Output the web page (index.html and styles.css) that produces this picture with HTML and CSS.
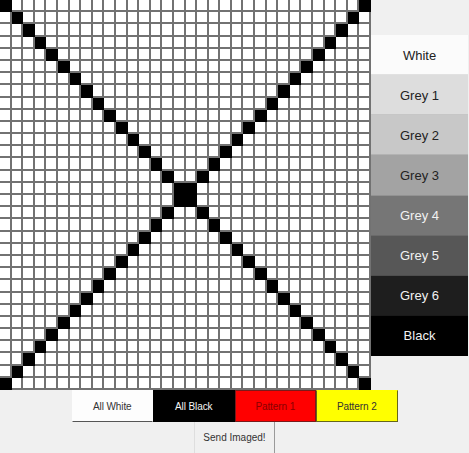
FILE: index.html
```html
<!DOCTYPE html>
<html>
<head>
<meta charset="utf-8">
<link rel="stylesheet" href="styles.css">
</head>
<body>
<div class="app">
  <div class="top">
    <div class="grid" id="grid"></div>
    <div class="side">
      <div class="spacer"></div>
      <div class="shade s-white">White</div>
      <div class="shade s-g1">Grey 1</div>
      <div class="shade s-g2">Grey 2</div>
      <div class="shade s-g3">Grey 3</div>
      <div class="shade s-g4 light">Grey 4</div>
      <div class="shade s-g5 light">Grey 5</div>
      <div class="shade s-g6 light">Grey 6</div>
      <div class="shade s-black light">Black</div>
    </div>
  </div>
  <div class="actions">
    <div class="btn b-white">All White</div>
    <div class="btn b-black">All Black</div>
    <div class="btn b-red">Pattern 1</div>
    <div class="btn b-yellow">Pattern 2</div>
  </div>
  <div class="send-row">
    <div class="send">Send Imaged!</div>
  </div>
</div>
<script src="script.js"></script>
</body>
</html>
```

FILE: styles.css
```css
html, body {
  margin: 0;
  padding: 0;
  background: #f0f0f0;
}
body {
  font-family: "Liberation Sans", Arial, sans-serif;
  color: #222;
}
.app {
  width: 469px;
  height: 453px;
  overflow: hidden;
  background: #f0f0f0;
}
.top {
  display: flex;
  height: 390px;
}
.grid {
  width: 371px;
  height: 390px;
  display: grid;
  grid-template-columns: repeat(32, 1fr);
  grid-template-rows: repeat(32, 1fr);
  background: #fff;
  flex: none;
}
.cell {
  box-sizing: border-box;
  background: #fff;
  border-right: 2px solid #727272;
  border-bottom: 2px solid #727272;
}
.cell.on {
  background: #000;
  border-color: #000;
}
.side {
  width: 97px;
  display: flex;
  flex-direction: column;
}
.spacer {
  height: 35px;
  flex: none;
}
.shade {
  box-sizing: border-box;
  height: 40.125px;
  display: flex;
  align-items: center;
  justify-content: center;
  padding-top: 1px;
  font-size: 13px;
  color: #222;
  border-bottom: 1px solid rgba(0, 0, 0, 0.1);
}
.shade.light { color: #f2f2f2; }
.s-white { background: #fbfbfb; }
.s-g1 { background: #dddddd; }
.s-g2 { background: #c8c8c8; }
.s-g3 { background: #a3a3a3; }
.s-g4 { background: #767676; }
.s-g5 { background: #575757; }
.s-g6 { background: #1e1e1e; }
.s-black { background: #000; }
.actions {
  display: flex;
  justify-content: center;
  height: 32px;
}
.btn {
  box-sizing: border-box;
  width: 81.5px;
  height: 32px;
  display: flex;
  align-items: center;
  justify-content: center;
  font-size: 10px;
  letter-spacing: -0.1px;
  border: 1px solid rgba(0, 0, 0, 0.55);
  border-top-color: transparent;
}
.b-white {
  background: #fdfdfd;
  color: #333;
  border-color: #fdfdfd #fdfdfd #555 #fdfdfd;
}
.b-black { background: #000; color: #f4f4f4; }
.b-red { background: #ff0000; color: #8a0000; border-color: #7a1a1a; }
.b-yellow { background: #ffff00; color: #333; border-color: #ffff00 #66661a #66661a #66661a; }
.send-row {
  display: flex;
  justify-content: center;
  height: 31px;
}
.send {
  box-sizing: border-box;
  width: 81px;
  height: 31px;
  display: flex;
  align-items: center;
  justify-content: center;
  font-size: 10px;
  color: #333;
  border-left: 1px solid #dedede;
  border-right: 1px solid #9a9a9a;
}
```

FILE: script.js
```js
var grid = document.getElementById('grid');
var n = 32;
for (var r = 0; r < n; r++) {
  for (var c = 0; c < n; c++) {
    var d = document.createElement('div');
    d.className = (r === c || r + c === n - 1) ? 'cell on' : 'cell';
    grid.appendChild(d);
  }
}
```
